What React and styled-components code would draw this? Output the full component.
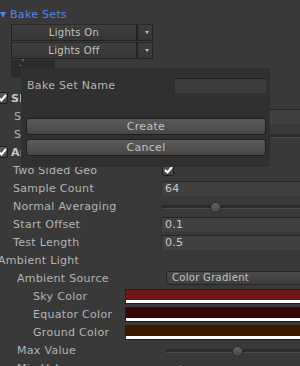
import React from "react";
import styled, { createGlobalStyle } from "styled-components";

const GlobalStyle = createGlobalStyle`
  html, body {
    margin: 0;
    padding: 0;
    background: #393939;
  }
  body {
    font-family: "DejaVu Sans", Verdana, sans-serif;
  }
`;

const Inspector = styled.div`
  position: relative;
  width: 300px;
  height: 366px;
  overflow: hidden;
  background: #393939;
  color: #b4b4b4;
  font-size: 11px;
  letter-spacing: 0.3px;
`;

const Foldout = styled.div`
  display: flex;
  align-items: center;
  height: 16px;
  margin-top: 6px;
  padding-top: 1px;
  box-sizing: border-box;
  color: #4f86e8;
`;

const Triangle = styled.span`
  width: 0;
  height: 0;
  border-left: 3px solid transparent;
  border-right: 3px solid transparent;
  border-top: 6px solid #4f86e8;
  margin: 0 4px 0 0;
`;

const SetRow = styled.div`
  display: flex;
  height: 17px;
  margin: ${(p) => p.$top}px 0 0 11px;
`;

const MiniButton = styled.div`
  width: ${(p) => p.$w}px;
  box-sizing: border-box;
  border: 1px solid #222;
  border-top-color: #2a2a2a;
  background: linear-gradient(#3e3e3e, #363636);
  color: #c4c4c4;
  font-size: 10px;
  display: flex;
  align-items: center;
  justify-content: center;
`;

const Arrow = styled.span`
  width: 0;
  height: 0;
  border-left: 2px solid transparent;
  border-right: 2px solid transparent;
  border-top: 3px solid #bbb;
  margin-left: 3px;
`;

const DarkBox = styled.div`
  width: 44px;
  height: 17px;
  margin: 1px 0 0 11px;
  background: #2b2b2b;
  color: #aaa;
  font-size: 8px;
  line-height: 8px;
  padding-left: 8px;
  box-sizing: border-box;
`;

const Rows = styled.div`
  margin-top: 12px;
`;

const Row = styled.div`
  display: flex;
  align-items: center;
  height: 18px;
`;

const Label = styled.div`
  flex: 0 0 ${(p) => p.$w}px;
  padding-left: ${(p) => p.$indent || 0}px;
  padding-top: 1px;
  margin-left: ${(p) => p.$shift || 0}px;
  box-sizing: border-box;
  white-space: nowrap;
  overflow: hidden;
  line-height: 17px;
  font-weight: ${(p) => (p.$bold ? "bold" : "normal")};
  color: ${(p) => (p.$bold ? "#c8c8c8" : "#b4b4b4")};
`;

const Field = styled.div`
  flex: 1;
  height: 15px;
  margin-right: -6px;
  box-sizing: border-box;
  background: #414141;
  border-top: 1px solid #262626;
  border-left: 1px solid #2f2f2f;
  padding-left: 3px;
  line-height: 14px;
  color: #c8c8c8;
`;

const Slider = styled.div`
  flex: 1;
  position: relative;
  height: 18px;
  margin-right: -6px;
`;

const Track = styled.div`
  position: absolute;
  left: 0;
  right: 0;
  top: ${(p) => p.$top}px;
  height: 4px;
  border-radius: 2px;
  background: #2a2a2a;
  border-bottom: 1px solid #4a4a4a;
  box-sizing: border-box;
`;

const Thumb = styled.div`
  position: absolute;
  top: ${(p) => p.$top - 5}px;
  left: ${(p) => p.$pos - 5.5}px;
  width: 11px;
  height: 11px;
  border-radius: 50%;
  box-sizing: border-box;
  border: 1px solid #2a2a2a;
  background: linear-gradient(#646464, #474747);
`;

const CheckBox = styled.div`
  flex: 0 0 12px;
  height: 12px;
  box-sizing: border-box;
  border: 1px solid #1f1f1f;
  border-radius: 2px;
  background: linear-gradient(#5a5a5a, #434343);
  margin-left: ${(p) => p.$shift || 0}px;
  margin-right: ${(p) => p.$gap || 0}px;
  display: flex;
  align-items: center;
  justify-content: center;
`;

const PopupField = styled.div`
  flex: 1;
  height: 14px;
  margin-right: -6px;
  box-sizing: border-box;
  border: 1px solid #262626;
  border-radius: 3px;
  background: linear-gradient(#4a4a4a, #3d3d3d);
  color: #c4c4c4;
  font-size: 10px;
  line-height: 12px;
  padding-left: 5px;
`;

const Swatch = styled.div`
  flex: 1;
  height: 15px;
  margin-right: -6px;
  box-sizing: border-box;
  border: 1px solid #1e1e1e;
  background: linear-gradient(
    to bottom,
    ${(p) => p.$color} 0 10px,
    #ffffff 10px 13px
  );
`;

const Dialog = styled.div`
  position: absolute;
  left: 21px;
  top: 68px;
  width: 249px;
  height: 99px;
  box-sizing: border-box;
  background: #303030;
  padding: 10px 4px 0 5px;
  display: flex;
  flex-direction: column;
`;

const NameRow = styled.div`
  display: flex;
  align-items: center;
  height: 15px;
`;

const NameLabel = styled.div`
  flex: 1;
  padding-left: 1px;
  padding-top: 1px;
  line-height: 14px;
`;

const NameInput = styled.div`
  width: 91px;
  height: 15px;
  box-sizing: border-box;
  background: #3c3c3c;
  border-top: 1px solid #1f1f1f;
`;

const Button = styled.div`
  height: 17px;
  margin-top: ${(p) => p.$top}px;
  box-sizing: border-box;
  border: 1px solid #1f1f1f;
  border-radius: 3px;
  background: linear-gradient(#5a5a5a, #464646);
  color: #c2c2c2;
  display: flex;
  align-items: center;
  justify-content: center;
`;

const Check = () => (
  <svg width="9" height="8" viewBox="0 0 9 8">
    <polyline points="1,4 3.5,6.5 8,1" fill="none" stroke="#fff" strokeWidth="2" />
  </svg>
);

const App = () => {
  return (
    <>
      <GlobalStyle />
      <Inspector>
        <Foldout>
          <Triangle />
          Bake Sets
        </Foldout>
        <SetRow $top={2}>
          <MiniButton $w={126}>Lights On</MiniButton>
          <MiniButton $w={16}>
            <Arrow />
          </MiniButton>
        </SetRow>
        <SetRow $top={1}>
          <MiniButton $w={126}>Lights Off</MiniButton>
          <MiniButton $w={16}>
            <Arrow />
          </MiniButton>
        </SetRow>
        <DarkBox>.'</DarkBox>

        <Rows>
          <Row>
            <CheckBox $shift={-4} $gap={3}>
              <Check />
            </CheckBox>
            <Label $w={150} $bold>
              Slice Settings
            </Label>
          </Row>
          <Row>
            <Label $w={161} $indent={14}>
              Slice Count
            </Label>
            <Field>4</Field>
          </Row>
          <Row>
            <Label $w={161} $indent={14}>
              Slice Spacing
            </Label>
            <Slider>
              <Track $top={9} />
            </Slider>
          </Row>
          <Row>
            <CheckBox $shift={-4} $gap={3}>
              <Check />
            </CheckBox>
            <Label $w={150} $bold>
              Ambient Occlusion
            </Label>
          </Row>
          <Row>
            <Label $w={162} $indent={13}>
              Two Sided Geo
            </Label>
            <CheckBox>
              <Check />
            </CheckBox>
          </Row>
          <Row>
            <Label $w={161} $indent={13}>
              Sample Count
            </Label>
            <Field>64</Field>
          </Row>
          <Row>
            <Label $w={161} $indent={13}>
              Normal Averaging
            </Label>
            <Slider>
              <Track $top={8} />
              <Thumb $top={10} $pos={54} />
            </Slider>
          </Row>
          <Row>
            <Label $w={161} $indent={13}>
              Start Offset
            </Label>
            <Field>0.1</Field>
          </Row>
          <Row>
            <Label $w={161} $indent={13}>
              Test Length
            </Label>
            <Field>0.5</Field>
          </Row>
          <Row>
            <Label $w={200} $shift={-2}>
              Ambient Light
            </Label>
          </Row>
          <Row>
            <Label $w={166} $indent={17}>
              Ambient Source
            </Label>
            <PopupField>Color Gradient</PopupField>
          </Row>
          <Row>
            <Label $w={125} $indent={33}>
              Sky Color
            </Label>
            <Swatch $color="#6f1616" />
          </Row>
          <Row>
            <Label $w={125} $indent={33}>
              Equator Color
            </Label>
            <Swatch $color="#360606" />
          </Row>
          <Row>
            <Label $w={125} $indent={33}>
              Ground Color
            </Label>
            <Swatch $color="#3c1a00" />
          </Row>
          <Row>
            <Label $w={165} $indent={17}>
              Max Value
            </Label>
            <Slider>
              <Track $top={8} />
              <Thumb $top={10} $pos={72} />
            </Slider>
          </Row>
          <Row>
            <Label $w={165} $indent={17}>
              Min Value
            </Label>
            <Slider>
              <Track $top={8} />
              <Thumb $top={10} $pos={15} />
            </Slider>
          </Row>
        </Rows>

        <Dialog>
          <NameRow>
            <NameLabel>Bake Set Name</NameLabel>
            <NameInput />
          </NameRow>
          <Button $top={25}>Create</Button>
          <Button $top={4}>Cancel</Button>
        </Dialog>
      </Inspector>
    </>
  );
};

export default App;
